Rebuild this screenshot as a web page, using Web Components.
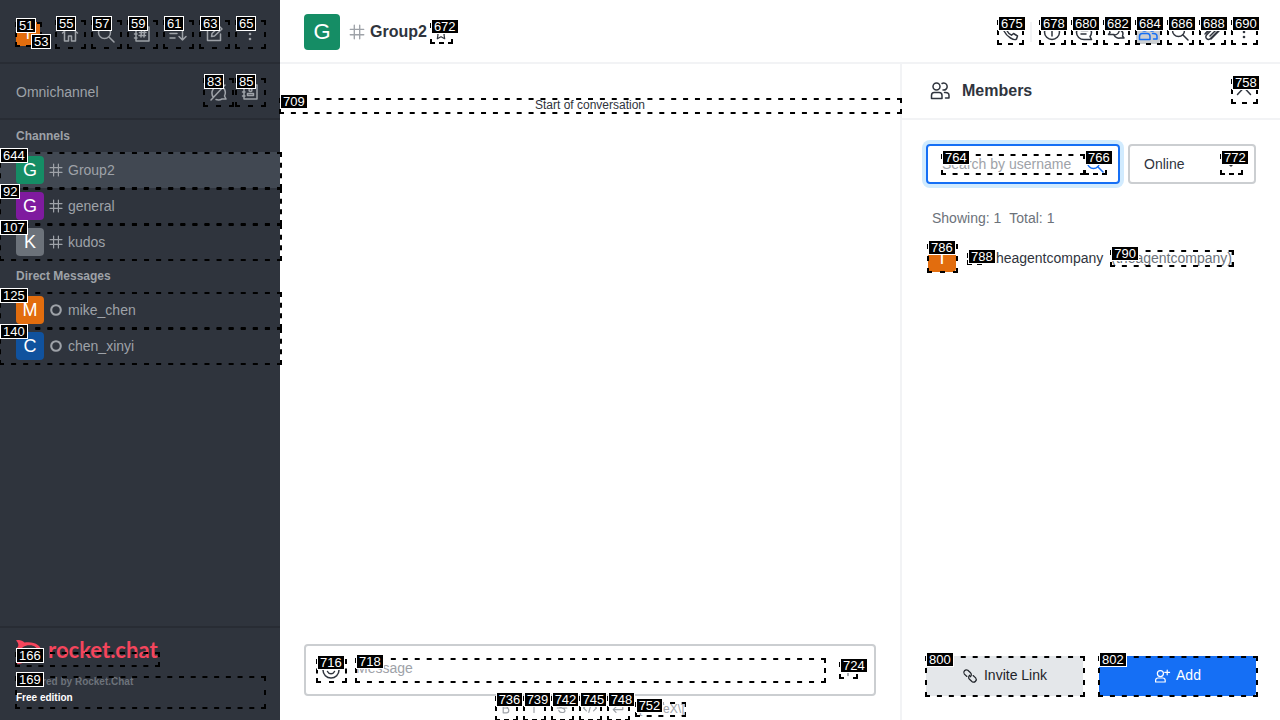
<!DOCTYPE html>
<html lang="en">
<head>
<meta charset="utf-8">
<title>Group2 - Rocket.Chat</title>
<style>
  html, body { margin: 0; height: 100%; overflow: hidden; }
  body { font-family: "Liberation Sans", Arial, sans-serif; font-size: 14px; line-height: 20px; color: #2f343d; background: #fff; }
</style>
</head>
<body>
<chat-app></chat-app>
<script>
const ICONS = {
  home: '<path d="M2.500 9 10 2.500 17.500 9M4.500 8v9h4v-5h3v5h4V8M14 3v2.500"/>',
  search: '<circle cx="8.500" cy="8.500" r="6"/><path d="m13 13 5 5"/>',
  directory: '<path d="M4 3h13v14H4zM2.500 6H5M2.500 10H5M2.500 14H5M9.500 6.500 9 13M12.500 6.500 12 13M7.500 8.500h6.500M7 11.500h6.500"/>',
  sort: '<path d="M2 5h9M2 9.500h7M2 14h5M14.500 4v12M11 12.500l3.500 3.500 3.500-3.500"/>',
  edit: '<path d="M11 3.500H3.500v13h13V10M7.500 12.500l.5-3 7.500-7 2.500 2.500-7.500 7z"/>',
  kebab: '<g fill="currentColor" stroke="none"><circle cx="10" cy="5" r="1.300"/><circle cx="10" cy="10" r="1.300"/><circle cx="10" cy="15" r="1.300"/></g>',
  hash: '<path d="M7 2.500v15M13 2.500v15M2.500 7h15M2.500 13h15"/>',
  ring: '<circle cx="10" cy="10" r="6" stroke-width="2.600"/>',
  noqueue: '<path d="M17 3 3 18M5.500 15.500A7.500 7.500 0 0 1 14 4M16 6.500a7.500 7.500 0 0 1 .5 7.500l1.500 3h-4a7.500 7.500 0 0 1-6 .500"/>',
  contacts: '<path d="M4 3h13v14H4zM2.500 6H5M2.500 10H5M2.500 14H5M7.500 13.500v-2h6v2z"/><circle cx="10.500" cy="8" r="1.500"/>',
  star: '<path d="m10 2.500 2.300 4.900 5.200.7-3.800 3.700.9 5.400-4.600-2.600-4.600 2.600.9-5.400L2.500 8.100l5.200-.7z"/>',
  phone: '<path d="M3 3.500 6 2.500l2.500 4-1.700 2c1 2 2.700 3.700 4.700 4.700l2-1.700 4 2.500-1 3c-1 1-3.500.5-6-1-3-1.800-5-4-6.500-7C3 6.500 2.500 4.500 3 3.500z"/>',
  info: '<circle cx="10" cy="10" r="7.500"/><path d="M10 9v5M10 5.500V7"/>',
  thread: '<path d="M17.500 17.500H10a7.500 7 0 1 1 7.500-7c0 1.500-.7 3-1.500 4zM7 8.500h7M7 12h5"/>',
  discussion: '<path d="M8 12.500H2.500L4 10.500a5 5 0 1 1 4.500 2.500M8 13c1 2.500 4 3.500 6 3h4l-1.500-2c1-2.500.5-4.500-2-6"/>',
  members: '<circle cx="6.500" cy="5.500" r="3.500"/><path d="M1.500 17.500v-3c0-2 1.200-3 2.700-3h5c1.500 0 2.800 1 2.800 3v3zM12 2.500a3.500 3.500 0 1 1 1 6.500M14.500 11.500h1c2 0 3.500 1 3.500 3v2.500h-3.500"/>',
  clip: '<path d="m4 11 7-7a3.500 3.500 0 0 1 5 5l-7.500 7.500a2.500 2.500 0 0 1-4-3.500L12 5.500a1.500 1.500 0 0 1 2.300 2.300L8 14"/><path d="m17 9-8 8M3 12l8-8"/>',
  close: '<path d="m3.500 13.500 6.500-7 6.500 7"/>',
  down: '<path d="m6 8 4 4 4-4"/>',
  smile: '<circle cx="10" cy="10" r="8"/><path d="M6.500 11.500c1.500 3 5.500 3 7 0M7.500 7v1M12.500 7v1"/>',
  plus: '<path d="M10 3v14M3 10h14"/>',
  bold: '<path d="M6.500 4.500H10a2.700 2.700 0 0 1 0 5.500H6.500zM6.500 10h4a2.700 2.700 0 0 1 0 6h-4z"/>',
  italic: '<path d="M10 4.500v11"/>',
  strike: '<path d="M13.500 6.500c-1-3-7-3-7 .5 0 2 2 2.500 3.500 3s3.700 1 3.700 3c0 3.500-6.700 3.500-7.700 0M4 10h12"/>',
  code: '<path d="m5.500 6.500-3.500 3.500 3.500 3.500M14.500 6.500l3.500 3.500-3.500 3.500M11.500 4.500l-3 11"/>',
  multiline: '<path d="M16 6v6H4M7.500 8.500 4 12l3.500 3.500"/>',
  link: '<g transform="rotate(42 10 10)"><path d="M7.500 13H3.200a3.300 3.300 0 0 1 0-6.500h4.500a3.300 3.300 0 0 1 3.200 4M12.500 7h4.300a3.300 3.300 0 0 1 0 6.500h-4.500a3.300 3.300 0 0 1-3.200-4"/></g>',
  adduser: '<circle cx="8" cy="7" r="3.800"/><path d="M2 17.500v-2c0-2 1-3 3-3h6c2 0 3 1 3 3v2zM16.500 2.500v6M13.500 5.500h6"/>'
};

const define = (name, html, setup) => {
  const template = document.createElement('template');
  template.innerHTML = html;
  customElements.define(name, class extends HTMLElement {
    constructor() {
      super();
      this.attachShadow({ mode: 'open' }).append(template.content.cloneNode(true));
    }
    connectedCallback() { if (setup) setup(this, this.shadowRoot); }
  });
};

/* Numbered dashed frame laid over the content of its slot */
define('tag-mark', `
<style>
  :host { display: block; position: relative; box-sizing: border-box; min-width: 0; flex: none; }
  .frame { position: absolute; inset: 0 -2px -1px -1px; pointer-events: none; z-index: 2; }
  svg { position: absolute; inset: 0; width: 100%; height: 100%; }
  line { stroke: #000; stroke-width: 4; stroke-dasharray: 5 7; }
  .label { position: absolute; left: 0; top: -4px; z-index: 3; box-sizing: border-box; height: 15px; padding: 0 2px;
    border: 1px solid #fff; background: #000; color: #fff; font: 400 13px/13px "Liberation Sans", Arial, sans-serif; pointer-events: none; }
  :host([bare]) .frame { display: none; }
</style>
<slot></slot>
<div class="frame"><svg aria-hidden="true">
  <line x1="0" y1="0" x2="100%" y2="0"/><line x1="0" y1="100%" x2="100%" y2="100%"/>
  <line x1="0" y1="0" x2="0" y2="100%"/><line x1="100%" y1="0" x2="100%" y2="100%"/>
</svg></div>
<span class="label"></span>`, (el, root) => {
  root.querySelector('.label').textContent = el.getAttribute('n');
  /* The gap is fitted to the side so that each side ends in a dash */
  const fit = () => {
    const frame = root.querySelector('.frame').getBoundingClientRect();
    root.querySelectorAll('line').forEach((line, i) => {
      const side = i < 2 ? frame.width : frame.height;
      if (side < 10) return;
      const count = Math.max(1, Math.round((side - 5) / 12));
      line.style.strokeDasharray = `5 ${(side - 5) / count - 5}`;
    });
  };
  fit();
  new ResizeObserver(fit).observe(el);
});

define('rc-icon', `
<style>
  :host { display: block; width: 20px; height: 20px; flex: none; }
  svg { display: block; width: 100%; height: 100%; fill: none; stroke: currentColor; stroke-width: 1.500; stroke-linejoin: round; stroke-linecap: round; overflow: visible; }
</style>
<svg viewBox="0 0 20 20" aria-hidden="true"></svg>`, (el, root) => {
  root.querySelector('svg').innerHTML = ICONS[el.getAttribute('name')];
});

define('rc-avatar', `
<style>
  :host { display: flex; align-items: center; justify-content: center; width: 28px; height: 28px; flex: none; border-radius: 4px; color: #fff; font-size: 18px; line-height: 28px; }
  :host([size="small"]) { width: 24px; height: 24px; font-size: 16px; line-height: 24px; border-radius: 2px; }
  :host([size="large"]) { width: 36px; height: 36px; font-size: 22px; line-height: 36px; }
</style><slot></slot>`, el => { el.style.background = el.getAttribute('color'); });

/* Square icon button with its own number */
define('icon-button', `
<style>
  :host { display: block; --size: 24px; --tall: var(--size); flex: none; }
  :host([size="28"]) { --size: 28px; }
  :host([size="20"]) { --size: 20px; }
  :host([tall]) { --tall: 24px; }
  button { display: flex; align-items: center; justify-content: center; width: var(--size); height: var(--tall); padding: 0; border: 0; border-radius: 4px; background: none; color: inherit; }
  :host([pressed]) button { background: #cbced1; color: #156ff5; }
  :host([size="20"]) rc-icon { width: 16px; height: 16px; }
</style>
<div></div>`, (el, root) => {
  const { n, icon, label } = Object.fromEntries([...el.attributes].map(a => [a.name, a.value]));
  root.querySelector('div').innerHTML =
    `<tag-mark n="${n}"><button type="button" aria-label="${label}"><rc-icon name="${icon}"></rc-icon></button></tag-mark>`;
});

define('room-item', `
<style>
  :host { display: block; }
  a { display: flex; align-items: center; height: 36px; padding: 0 16px; color: #9ea2a8; text-decoration: none; box-sizing: border-box; }
  :host([selected]) a { background: #414852; }
  .kind { width: 16px; height: 16px; margin: 0 4px; }
</style>
<a href="#"></a>`, (el, root) => {
  const name = el.getAttribute('name');
  root.querySelector('a').innerHTML = `<rc-avatar color="${el.getAttribute('color')}">${name[0].toUpperCase()}</rc-avatar><rc-icon class="kind" name="${el.getAttribute('kind')}"></rc-icon><span>${name}</span>`;
});

define('side-bar', `
<style>
  :host { display: flex; flex-direction: column; min-height: 0; background: #2f343d; color: #9ea2a8; }
  .top, .omni { display: flex; align-items: center; box-sizing: border-box; padding: 0 16px; border-bottom: 2px solid #282c34; }
  .top { height: 64px; gap: 8px; justify-content: space-between; padding-top: 6px; }
  .omni { height: 56px; gap: 4px; padding-top: 2px; }
  .omni span { flex: 1; }
  .me { margin-right: 8px; }
  .state { position: absolute; left: 15px; top: 16px; }
  .dot { display: block; width: 8px; height: 8px; border-radius: 50%; background: #2de0a5; }
  h2 { margin: 0; padding: 0 16px; font-size: 12px; line-height: 32px; font-weight: 700; }
  nav { flex: 1; min-height: 0; }
  footer { border-top: 2px solid #282c34; padding: 10px 16px 12px; }
  .wordmark { height: 14px; }
  .brand { display: flex; align-items: center; gap: 6px; height: 24px; color: #f5455c; font: 700 22px/24px Lato, "Open Sans", sans-serif; white-space: nowrap; }
  .brand svg { width: 26px; height: 24px; flex: none; margin-top: 4px; }
  .logo { height: 14px; margin-bottom: 10px; width: 142px; }
  .legal { height: 32px; font-size: 10px; font-weight: 700; color: #6c727a; }
  .legal p { margin: 0; line-height: 16px; }
  .legal .powered { line-height: 12px; padding-bottom: 2px; }
  .legal .plan { color: #fff; }
</style>
<div class="top">
  <tag-mark n="51" class="me"><rc-avatar size="small" color="#e26d0e">T</rc-avatar>
    <tag-mark n="53" bare class="state"><span class="dot"></span></tag-mark></tag-mark>
  <icon-button size="28" n="55" icon="home" label="Home"></icon-button>
  <icon-button size="28" n="57" icon="search" label="Search"></icon-button>
  <icon-button size="28" n="59" icon="directory" label="Directory"></icon-button>
  <icon-button size="28" n="61" icon="sort" label="Display"></icon-button>
  <icon-button size="28" n="63" icon="edit" label="Create new"></icon-button>
  <icon-button size="28" n="65" icon="kebab" label="Menu"></icon-button>
</div>
<div class="omni"><span>Omnichannel</span>
  <icon-button size="28" n="83" icon="noqueue" label="Availability"></icon-button>
  <icon-button size="28" n="85" icon="contacts" label="Contact centre"></icon-button>
</div>
<nav>
  <h2>Channels</h2>
  <tag-mark n="644"><room-item selected name="Group2" kind="hash" color="#158d65"></room-item></tag-mark>
  <tag-mark n="92"><room-item name="general" kind="hash" color="#7f1b9f"></room-item></tag-mark>
  <tag-mark n="107"><room-item name="kudos" kind="hash" color="#6c727a"></room-item></tag-mark>
  <h2>Direct Messages</h2>
  <tag-mark n="125"><room-item name="mike_chen" kind="ring" color="#e26d0e"></room-item></tag-mark>
  <tag-mark n="140"><room-item name="chen_xinyi" kind="ring" color="#10529e"></room-item></tag-mark>
</nav>
<footer>
  <div class="wordmark"><div class="brand">
    <svg viewBox="0 0 26 24" aria-hidden="true"><path fill="#f5455c" fill-rule="evenodd" d="M0 .5C3-.5 6.500.5 8.500 2.500 18 1 25.500 5 25.500 12S18 23 8.500 21.500C6.500 23.500 3 24.500 0 23.500c2-2 3-4 2-6C-.5 14-.5 10 2 6.500c1-2 0-4-2-6zM4.500 12.200c0 4.600 4 6.800 9 6.800s8.500-2.600 8.500-6.800-3.500-6.900-8.500-6.900-9 2.500-9 6.900z"/></svg>
    <span>rocket.chat</span></div></div>
  <tag-mark n="166" class="logo"></tag-mark>
  <tag-mark n="169"><div class="legal"><p class="powered">Powered by Rocket.Chat</p><p class="plan">Free edition</p></div></tag-mark>
</footer>`);

define('room-header', `
<style>
  :host { display: flex; align-items: center; height: 64px; box-sizing: border-box; padding: 2px 24px 0; border-bottom: 2px solid #f2f3f5; }
  .hash { margin: 0 4px 0 8px; width: 18px; height: 18px; color: #9ea2a8; }
  h1 { margin: 0 4px 0 0; font-size: 16px; line-height: 24px; }
  .fav { margin-top: 2px; }
  .tools { display: flex; align-items: center; gap: 8px; margin-left: auto; }
  hr { width: 2px; height: 20px; margin: 0; border: 0; background: #f2f3f5; }
</style>
<rc-avatar size="large" color="#158d65">G</rc-avatar>
<rc-icon class="hash" name="hash"></rc-icon>
<h1>Group2</h1>
<icon-button class="fav" size="20" n="672" icon="star" label="Favourite"></icon-button>
<div class="tools">
  <icon-button n="675" icon="phone" label="Call"></icon-button>
  <hr>
  <icon-button n="678" icon="info" label="Room information"></icon-button>
  <icon-button n="680" icon="thread" label="Threads"></icon-button>
  <icon-button n="682" icon="discussion" label="Discussion"></icon-button>
  <icon-button n="684" icon="members" label="Members" pressed></icon-button>
  <icon-button n="686" icon="search" label="Search messages"></icon-button>
  <icon-button n="688" icon="clip" label="Files"></icon-button>
  <icon-button n="690" icon="kebab" label="Options"></icon-button>
</div>`);

define('message-pane', `
<style>
  :host { display: flex; flex-direction: column; min-width: 0; min-height: 0; }
  .start { margin: 34px 0 auto; }
  .start p { margin: 0; font-size: 12px; line-height: 15px; text-align: center; }
  .box { display: flex; align-items: center; margin: 0 24px; height: 52px; box-sizing: border-box; border: 2px solid #cbced1; border-radius: 4px; padding: 0 18px 0 11px; }
  .emoji button { display: flex; justify-content: center; align-items: center; width: 28px; height: 23px; padding: 0; border: 0; background: none; color: #2f343d; }
  .field { flex: 1; margin: 0 16px 0 11px; }
  input { display: block; box-sizing: border-box; width: 100%; height: 24px; padding: 0 0 4px; border: 0; outline: 0; background: none; font: 14px/20px "Liberation Sans", Arial, sans-serif; }
  input::placeholder { color: #9ea2a8; opacity: 1; }
  .more button { display: block; width: 16px; height: 16px; border: 0; padding: 0; background: none; color: #6c727a; }
  .more rc-icon { width: 16px; height: 16px; }
  .bar { display: flex; justify-content: center; gap: 8px; height: 24px; color: #9ea2a8; }
  .bar a { display: block; color: inherit; text-decoration: none; font-size: 12px; line-height: 14px; }
  .bar tag-mark { margin-top: 6px; height: 14px; }
</style>
<tag-mark n="709" class="start"><p>Start of conversation</p></tag-mark>
<div class="box">
  <tag-mark n="716" class="emoji"><button type="button" aria-label="Emoji"><rc-icon name="smile"></rc-icon></button></tag-mark>
  <tag-mark n="718" class="field"><input type="text" placeholder="Message" aria-label="Message"></tag-mark>
  <tag-mark n="724" class="more"><button type="button" aria-label="More actions"><rc-icon name="plus"></rc-icon></button></tag-mark>
</div>
<div class="bar">
  <icon-button size="20" tall n="736" icon="bold" label="Bold"></icon-button>
  <icon-button size="20" tall n="739" icon="italic" label="Italic"></icon-button>
  <icon-button size="20" tall n="742" icon="strike" label="Strike"></icon-button>
  <icon-button size="20" tall n="745" icon="code" label="Inline code"></icon-button>
  <icon-button size="20" tall n="748" icon="multiline" label="Multi line"></icon-button>
  <tag-mark n="752"><a href="#">\\[KaTeX\\]</a></tag-mark>
</div>`);

define('members-panel', `
<style>
  :host { display: flex; flex-direction: column; box-sizing: border-box; border-left: 2px solid #f2f3f5; min-height: 0; }
  header { display: flex; align-items: center; height: 56px; box-sizing: border-box; padding: 0 24px 0 28px; border-bottom: 2px solid #f2f3f5; }
  h2 { flex: 1; margin: 0 0 0 12px; font-size: 16px; line-height: 24px; }
  .filters { display: grid; grid-template-columns: 1fr 128px; gap: 8px; padding: 24px 24px 0; }
  .search, .status { display: flex; align-items: flex-start; height: 40px; box-sizing: border-box; border: 2px solid #cbced1; border-radius: 4px; padding: 8px 13px 8px 14px; min-width: 0; }
  .search { border-color: #156ff5; box-shadow: 0 0 0 4px #d1ebfe; }
  .search .text { flex: 1; margin-right: 2px; }
  .search rc-icon { color: #156ff5; }
  input, select { display: block; box-sizing: border-box; width: 100%; height: 20px; padding: 0; margin: 0; border: 0; outline: 0; background: none; color: #2f343d; font: 14px/20px "Liberation Sans", Arial, sans-serif; appearance: none; }
  input::placeholder { color: #9ea2a8; opacity: 1; }
  .count { display: flex; gap: 8px; margin: 24px 30px 16px; color: #6c727a; }
  .member { display: flex; align-items: center; padding: 0 26px; white-space: nowrap; }
  .presence { margin: 0 12px; }
  .presence i { display: block; width: 12px; height: 11px; border-radius: 50%; background: #2de0a5; }
  .name { margin-right: 8px; }
  .user { color: #6c727a; line-height: 16px; }
  footer { display: grid; grid-template-columns: 1fr 1fr; gap: 16px; margin-top: auto; padding: 24px; }
  footer button { display: flex; align-items: center; justify-content: center; gap: 6px; width: 100%; height: 40px; padding: 0 0 2px; border: 0; border-radius: 4px; background: #e4e7ea; color: #1f2329; font: 14px/20px "Liberation Sans", Arial, sans-serif; }
  footer .add { background: #156ff5; color: #fff; }
  footer rc-icon { width: 16px; height: 16px; margin-top: 2px; }
</style>
<header><rc-icon name="members"></rc-icon><h2>Members</h2><icon-button n="758" icon="close" label="Close"></icon-button></header>
<div class="filters">
  <div class="search">
    <tag-mark n="764" class="text"><input type="text" placeholder="Search by username" aria-label="Search by username"></tag-mark>
    <tag-mark n="766"><rc-icon name="search"></rc-icon></tag-mark>
  </div>
  <div class="status">
    <select aria-label="Status"><option>Online</option><option>All</option></select>
    <tag-mark n="772"><rc-icon name="down"></rc-icon></tag-mark>
  </div>
</div>
<div class="count"><span>Showing: 1</span><span>Total: 1</span></div>
<div class="member">
  <tag-mark n="786"><rc-avatar color="#e26d0e">T</rc-avatar></tag-mark>
  <tag-mark n="788" class="presence"><i></i></tag-mark>
  <span class="name">theagentcompany</span>
  <tag-mark n="790" class="user">(theagentcompany)</tag-mark>
</div>
<footer>
  <tag-mark n="800"><button type="button"><rc-icon name="link"></rc-icon>Invite Link</button></tag-mark>
  <tag-mark n="802"><button type="button" class="add"><rc-icon name="adduser"></rc-icon>Add</button></tag-mark>
</footer>`);

define('chat-app', `
<style>
  :host { display: grid; grid-template-columns: 280px minmax(0, 1fr); height: 100vh; overflow: hidden; }
  main { display: grid; grid-template-columns: minmax(0, 1fr) 380px; grid-template-rows: auto minmax(0, 1fr); min-width: 0; min-height: 0; }
  room-header { grid-column: 1 / -1; }
  side-bar { position: relative; z-index: 1; }
</style>
<side-bar></side-bar>
<main><room-header></room-header><message-pane></message-pane><members-panel></members-panel></main>`);
</script>
</body>
</html>
